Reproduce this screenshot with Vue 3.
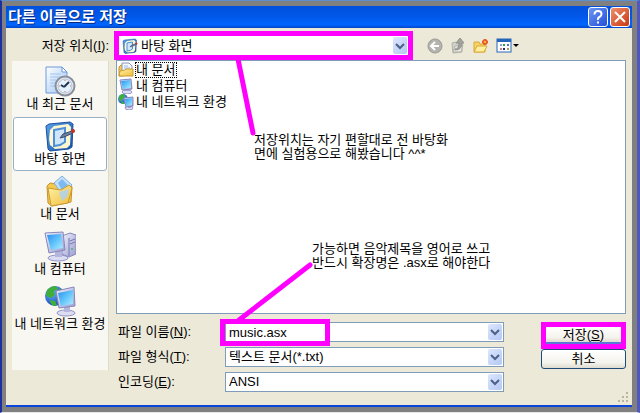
<script setup>
import { ref } from 'vue'

const places = [
  { id: 'recent', label: '내 최근 문서' },
  { id: 'desktop', label: '바탕 화면' },
  { id: 'documents', label: '내 문서' },
  { id: 'computer', label: '내 컴퓨터' },
  { id: 'network', label: '내 네트워크 환경' }
]

const files = [
  { id: 'documents', label: '내 문서' },
  { id: 'computer', label: '내 컴퓨터' },
  { id: 'network', label: '내 네트워크 환경' }
]

const activePlace = ref('desktop')
const focusedFile = ref('documents')
const location = ref('바탕 화면')
const fileName = ref('music.asx')
const fileType = ref('텍스트 문서(*.txt)')
const encoding = ref('ANSI')
</script>

<template>
  <div class="screen">
    <!-- shared icon shapes -->
    <svg class="defs" aria-hidden="true">
      <defs>
        <linearGradient id="screenFill" x1="0" y1="0" x2="1" y2="1">
          <stop offset="0" stop-color="#2f8df0" />
          <stop offset="0.5" stop-color="#5fc4fb" />
          <stop offset="1" stop-color="#b4ecff" />
        </linearGradient>
        <linearGradient id="caseFill" x1="0" y1="0" x2="1" y2="1">
          <stop offset="0" stop-color="#f0f1fc" />
          <stop offset="1" stop-color="#9a9cd0" />
        </linearGradient>
        <linearGradient id="folderFill" x1="0" y1="0" x2="1" y2="1">
          <stop offset="0" stop-color="#fff3a8" />
          <stop offset="1" stop-color="#f0bc3c" />
        </linearGradient>
        <linearGradient id="paperFill" x1="0" y1="0" x2="1" y2="1">
          <stop offset="0" stop-color="#ffffff" />
          <stop offset="1" stop-color="#9cc4f4" />
        </linearGradient>
        <linearGradient id="padFill" x1="0" y1="0" x2="1" y2="1">
          <stop offset="0" stop-color="#5aa2ea" />
          <stop offset="1" stop-color="#1450a8" />
        </linearGradient>
        <radialGradient id="globeFill" cx="0.35" cy="0.3" r="0.8">
          <stop offset="0" stop-color="#6fb4ff" />
          <stop offset="1" stop-color="#0b3fae" />
        </radialGradient>
      </defs>
      <symbol id="icon-recent" viewBox="0 0 32 32">
        <path d="M2 2h16l5 5v21H2z" fill="url(#paperFill)" stroke="#6c98da" />
        <path d="M18 2v5h5z" fill="#fff" stroke="#6c98da" />
        <path d="M6 9h11M6 12h10M6 15h6M6 18h5M6 21h5" stroke="#a3c4ef" />
        <circle cx="21" cy="21" r="9.5" fill="#e8edf6" stroke="#8a8f9c" stroke-width="2" />
        <circle cx="21" cy="21" r="7" fill="#e4f1ff" stroke="#b6bfce" />
        <path d="M20 22l5-5M17 20l3 2" stroke="#24364c" stroke-width="2" />
        <path d="M21 15v1M21 26v1M15 21h1M26 21h1" stroke="#d07a55" />
      </symbol>
      <symbol id="icon-desktop" viewBox="0 0 32 32">
        <path d="M2 6l3-2 21-2 3 2-1 23-3 2-19 2-2-2z" fill="url(#padFill)" stroke="#1d4f9d" />
        <path d="M10 6l14-2 3 3-1 18-3 3-12 1-5-4-1-6 1-9z" fill="#fdf6cf" />
        <path d="M10 10l11-2v14l-5 3-6 1z" fill="#cfe6fc" stroke="#4d90d8" stroke-width="2" />
        <path d="M16 18l3-4 9-3 1 2-9 4z" fill="#6d7f9a" stroke="#3c4c70" />
        <circle cx="29" cy="11" r="2" fill="#c03028" />
      </symbol>
      <symbol id="icon-documents" viewBox="0 0 32 32">
        <path d="M3 11l3-3 6 1 2 3 12-3 2 3-1 15-19 4-4-3z" fill="#f3c94e" stroke="#c6922a" />
        <path d="M10 8l8-7 10 9-9 10z" fill="#c6e1fb" stroke="#7db0e4" />
        <path d="M14 8l4-4 6 6-6 6z" fill="#7fb9f2" />
        <path d="M4 13l13 2 8-5 3 3-4 15-17 3z" fill="url(#folderFill)" stroke="#cb9a2e" />
        <path d="M15 17l10-3-2 8-5 4z" fill="#a8d2fa" opacity="0.8" />
      </symbol>
      <symbol id="icon-computer" viewBox="0 0 32 32">
        <path d="M18 6l8-3 6 2v19l-7 3-7-3z" fill="url(#caseFill)" stroke="#8688bb" />
        <path d="M25 8v18M26 11l5-2M26 14l5-2" stroke="#7476b0" />
        <circle cx="28" cy="19" r="1" fill="#4bb56c" />
        <ellipse cx="14" cy="28" rx="10" ry="3" fill="#dcddf3" stroke="#9294c4" />
        <path d="M11 21h7v6h-7z" fill="#b4b6de" />
        <path d="M1 3l18-1 2 18-16 3z" fill="url(#caseFill)" stroke="#8688bb" />
        <path d="M3 5l14-1 2 14-12 2z" fill="url(#screenFill)" />
      </symbol>
      <symbol id="icon-network" viewBox="0 0 32 32">
        <circle cx="11" cy="11" r="10" fill="url(#globeFill)" />
        <path d="M3 5q4-4 9-4l2 3-4 2 1 4-4 3-5-2zM6 15l5 1 2 4-3 1q-4-2-4-6zM16 3l4 4-4 3-2-3z" fill="#3fae3a" />
        <ellipse cx="22" cy="28" rx="9" ry="3" fill="#dcddf3" stroke="#9294c4" />
        <path d="M20 21h6v6h-6z" fill="#b4b6de" />
        <path d="M12 6l18-4 1 19-16 2z" fill="url(#caseFill)" stroke="#8688bb" />
        <path d="M14 8l15-3v14l-12 2z" fill="url(#screenFill)" />
      </symbol>
      <!-- 16px list versions -->
      <symbol id="small-documents" viewBox="0 0 16 16">
        <path d="M1 5l2-2h2v11H1z" fill="#f3c94e" stroke="#c6922a" />
        <path d="M4 1h7l3 3v8H4z" fill="#f4f8ff" stroke="#8a94b8" />
        <path d="M6 4h4M6 6h6" stroke="#9cb8e4" />
        <path d="M1 14l1-5 5-1 1-1h7v7z" fill="url(#folderFill)" stroke="#cb9a2e" />
      </symbol>
      <symbol id="small-computer" viewBox="0 0 16 16">
        <ellipse cx="9" cy="14" rx="5" ry="2" fill="#dcddf3" stroke="#9294c4" />
        <path d="M8 10h4v3H8z" fill="#a4a6d4" />
        <path d="M2 2l11-1 1 10-10 1z" fill="url(#caseFill)" stroke="#8688bb" />
        <path d="M3 3l9-1 1 8-8 1z" fill="url(#screenFill)" />
      </symbol>
      <symbol id="small-network" viewBox="0 0 16 16">
        <circle cx="5" cy="5" r="5" fill="url(#globeFill)" />
        <path d="M1 2q2-2 5-2l1 2-2 3-2 2-2-1zM3 7l3 1v2H4z" fill="#3fae3a" />
        <ellipse cx="11" cy="14" rx="4" ry="2" fill="#dcddf3" stroke="#9294c4" />
        <path d="M10 11h3v3h-3z" fill="#a4a6d4" />
        <path d="M6 4l9-1v9l-7 1z" fill="url(#caseFill)" stroke="#8688bb" />
        <path d="M7 5l7-1v7l-6 1z" fill="url(#screenFill)" />
      </symbol>
    </svg>

    <main class="dialog">
      <header class="title-bar">
        <h1>다른 이름으로 저장</h1>
        <button type="button" class="title-button help" aria-label="도움말">
          <svg width="18" height="18" viewBox="0 0 18 18" fill="none" stroke="#fff" stroke-width="2">
            <path d="M5.500 6.500q0-3.500 3.500-3.500t3.500 3q0 2-2 3T9 12" />
            <path d="M9 13.500v2" />
          </svg>
        </button>
        <button type="button" class="title-button close" aria-label="닫기">
          <svg width="18" height="18" viewBox="0 0 18 18" fill="none" stroke="#fff" stroke-width="2">
            <path d="M4 4l10 10M14 4L4 14" />
          </svg>
        </button>
      </header>

      <form class="body" @submit.prevent>
        <div class="location-row">
          <label for="location" class="location-label">저장 위치(<u>I</u>):</label>
          <div class="location-area">
            <div class="location-box marked">
              <div class="combo">
                <svg class="combo-icon" width="16" height="16"><use href="#icon-desktop" /></svg>
                <select id="location" v-model="location">
                  <option>바탕 화면</option>
                </select>
                <span class="arrow">
                  <svg width="10" height="8" viewBox="0 0 10 8"><path d="M1 2l4 4 4-4" /></svg>
                </span>
              </div>
            </div>
            <div class="toolbar">
              <button type="button" aria-label="뒤로">
                <svg width="16" height="16" viewBox="0 0 16 16">
                  <circle cx="8" cy="8" r="7" fill="#b4b4ae" stroke="#9a9a94" />
                  <path d="M12 8H5M8 4L4 8l4 4" fill="none" stroke="#fff" stroke-width="2" />
                </svg>
              </button>
              <button type="button" aria-label="한 수준 위로">
                <svg width="16" height="16" viewBox="0 0 16 16">
                  <path d="M2 5l4-1 1 1h5v9l-9 1z" fill="#d2d2ca" stroke="#b2b2aa" />
                  <path d="M3 14l2-6 8-1-2 7z" fill="#e8e8e0" stroke="#b2b2aa" />
                  <path d="M5 11q4 0 4-6H6l4-5 4 5h-2q0 7-7 7z" fill="#a2a29c" stroke="#94948e" />
                </svg>
              </button>
              <button type="button" aria-label="새 폴더 만들기">
                <svg width="16" height="16" viewBox="0 0 16 16">
                  <path d="M1 4h5l1 2h5v8H1z" fill="#f7d264" stroke="#d9a83a" />
                  <path d="M1 14l3-6h10l-3 6z" fill="#fff0a0" stroke="#d9a83a" />
                  <path d="M12 1v6M9 4h6M10 2l4 4M14 2l-4 4" stroke="#e85a28" stroke-width="2" />
                  <circle cx="12" cy="4" r="1" fill="#ffd24a" />
                </svg>
              </button>
              <button type="button" class="views" aria-label="보기 메뉴">
                <svg width="24" height="16" viewBox="0 0 24 16">
                  <rect x="1" y="1" width="14" height="13" fill="#fff" stroke="#2566bd" />
                  <path d="M1 2.500h14" stroke="#2566bd" stroke-width="3" />
                  <path d="M4 6h2v2H4z" fill="#8aa6d8" />
                  <path d="M7 6h2v2H7z" fill="#3c9a50" />
                  <path d="M11 6h2v2h-2z" fill="#4c78c0" />
                  <path d="M4 10h2v2H4z" fill="#c88080" />
                  <path d="M7 10h2v2H7z" fill="#182c80" />
                  <path d="M11 10h2v2h-2z" fill="#b09a40" />
                  <path d="M17 6h6l-3 3z" fill="#000" />
                </svg>
              </button>
            </div>
          </div>
        </div>

        <div class="main-row">
          <nav class="places">
            <button
              v-for="place in places"
              :key="place.id"
              type="button"
              class="place"
              :class="{ active: activePlace === place.id }"
              @click="activePlace = place.id"
            >
              <svg width="32" height="32"><use :href="`#icon-${place.id}`" /></svg>
              <span>{{ place.label }}</span>
            </button>
          </nav>

          <div class="content">
            <div class="file-pane">
              <ul class="file-list">
                <li v-for="file in files" :key="file.id" @click="focusedFile = file.id">
                  <svg width="16" height="16"><use :href="`#small-${file.id}`" /></svg>
                  <span :class="{ focused: focusedFile === file.id }">{{ file.label }}</span>
                </li>
              </ul>
              <svg class="pointers" width="1" height="1" aria-hidden="true">
                <path d="M121-2l15 74M193 204l-71 55" />
              </svg>
              <p class="note note-location">저장위치는 자기 편할대로 전 바탕화<br>면에 실험용으로 해봤습니다 ^^*</p>
              <p class="note note-name">가능하면 음악제목을 영어로 쓰고<br>반드시 확장명은 .asx로 해야한다</p>
            </div>

            <div class="bottom">
              <div class="fields">
                <label for="fileName">파일 이름(<u>N</u>):</label>
                <div class="combo name-combo">
                  <input id="fileName" v-model="fileName" type="text">
                  <button type="button" class="arrow" aria-label="파일 이름 목록">
                    <svg width="10" height="8" viewBox="0 0 10 8"><path d="M1 2l4 4 4-4" /></svg>
                  </button>
                </div>
                <label for="fileType">파일 형식(<u>T</u>):</label>
                <div class="combo">
                  <select id="fileType" v-model="fileType">
                    <option>텍스트 문서(*.txt)</option>
                  </select>
                  <span class="arrow">
                    <svg width="10" height="8" viewBox="0 0 10 8"><path d="M1 2l4 4 4-4" /></svg>
                  </span>
                </div>
                <label for="encoding">인코딩(<u>E</u>):</label>
                <div class="combo">
                  <select id="encoding" v-model="encoding">
                    <option>ANSI</option>
                  </select>
                  <span class="arrow">
                    <svg width="10" height="8" viewBox="0 0 10 8"><path d="M1 2l4 4 4-4" /></svg>
                  </span>
                </div>
              </div>
              <div class="actions">
                <div class="marked">
                  <button type="submit" class="save">저장(<u>S</u>)</button>
                </div>
                <button type="button" class="cancel">취소</button>
              </div>
            </div>
          </div>
        </div>
        <svg class="grip" width="12" height="12" viewBox="0 0 12 12" aria-hidden="true">
          <path d="M8 0h2v2H8zM4 4h2v2H4zM8 4h2v2H8zM0 8h2v2H0zM4 8h2v2H4zM8 8h2v2H8z" fill="#b8b4a0" />
        </svg>
      </form>
    </main>
  </div>
</template>

<style>
body {
  margin: 0;
}
</style>

<style scoped>
.screen {
  box-sizing: border-box;
  min-height: 100vh;
  display: flex;
  padding: 5px 5px 5px 4px;
  background: #808080;
  border-top: 1px solid #5b8fd0;
  border-left: 2px solid #1c2fa0;
  border-right: 3px solid #5058c0;
  border-bottom: 1px solid #e8e8e8;
  font-family: "Liberation Sans", "Noto Sans CJK KR", sans-serif;
  font-size: 13px;
  line-height: 16px;
  color: #000;
}

.defs {
  position: absolute;
  width: 0;
  height: 0;
}

.dialog {
  flex: 1;
  min-width: 0;
  display: flex;
  flex-direction: column;
  background: #ece9d8;
  border-bottom: 2px solid #0a46dc;
}

.title-bar {
  display: flex;
  align-items: center;
  gap: 2px;
  height: 22px;
  padding: 0 2px;
  background: linear-gradient(#0050dc, #0058ea 50%, #0066ff 85%, #0046c8);
}

h1 {
  flex: 1;
  margin: 0;
  font-size: 15px;
  line-height: 20px;
  font-weight: 700;
  color: #fff;
  text-shadow: 1px 1px #0a2a80;
}

button,
input,
select {
  margin: 0;
  padding: 0;
  border: none;
  background: none;
  font: inherit;
  color: inherit;
}

.title-button {
  display: flex;
  align-items: center;
  justify-content: center;
  width: 20px;
  height: 20px;
  border: 1px solid #fff;
  border-radius: 3px;
}

.help {
  background: linear-gradient(135deg, #6c96f4, #2450d8);
}

.close {
  background: linear-gradient(135deg, #f09070, #c83810);
}

.body {
  position: relative;
  flex: 1;
  display: flex;
  flex-direction: column;
  padding: 3px 6px 13px;
}

.location-row {
  display: flex;
  align-items: center;
  gap: 5px;
}

.location-label {
  width: 97px;
  text-align: right;
}

.location-area {
  flex: 1;
  display: grid;
  grid-template-columns: 7fr 5fr;
}

.marked {
  border: 5px solid #ff00ff;
}

.location-box .combo {
  border: none;
  height: 19px;
}

.toolbar {
  display: flex;
  align-items: center;
  gap: 7px;
  padding-left: 14px;
}

.toolbar button {
  display: flex;
}

.combo {
  position: relative;
  box-sizing: border-box;
  display: flex;
  align-items: center;
  height: 20px;
  background: #fff;
  border: 1px solid #7f9db9;
}

.combo-icon {
  margin-left: 3px;
}

.combo select,
.combo input {
  flex: 1;
  min-width: 0;
  height: 18px;
  padding: 0 20px 0 3px;
  appearance: none;
  outline: none;
}

.arrow {
  position: absolute;
  top: 1px;
  right: 1px;
  bottom: 1px;
  width: 14px;
  display: flex;
  align-items: center;
  justify-content: center;
  background: linear-gradient(135deg, #dce6fe, #b4c8f4);
  border-radius: 2px;
  pointer-events: none;
}

.arrow path {
  fill: none;
  stroke: #4d6185;
  stroke-width: 2;
}

.main-row {
  flex: 1;
  display: flex;
  gap: 7px;
}

.places {
  box-sizing: border-box;
  width: 97px;
  margin: 1px 0 22px;
  padding: 1px;
  display: flex;
  flex-direction: column;
  gap: 1px;
  background: #f8f7f2;
  border-right: 1px solid #dedbcb;
}

.place {
  display: flex;
  flex-direction: column;
  align-items: center;
  height: 54px;
  padding-top: 2px;
  border: 1px solid transparent;
  border-radius: 3px;
  line-height: 14px;
  white-space: nowrap;
}

.place.active {
  background: #fff;
  border-color: #98b0c4;
}

.content {
  flex: 1;
  min-width: 0;
  display: flex;
  flex-direction: column;
}

.file-pane {
  position: relative;
  flex: 1;
  min-height: 240px;
  background: #fff;
  border: 1px solid #7f9db9;
}

.file-list {
  margin: 0;
  padding: 1px;
  list-style: none;
}

.file-list li {
  display: flex;
  align-items: center;
  gap: 1px;
  height: 16px;
}

.file-list span {
  border: 1px dotted transparent;
  line-height: 14px;
}

.file-list .focused {
  border-color: #000;
}

.pointers {
  position: absolute;
  top: 0;
  left: 0;
  z-index: 2;
  overflow: visible;
}

.pointers path {
  fill: none;
  stroke: #ff00ff;
  stroke-width: 5;
  stroke-linecap: round;
}

.note {
  position: absolute;
  margin: 0;
  line-height: 14px;
  white-space: nowrap;
}

.note-location {
  top: 72px;
  left: 137px;
}

.note-name {
  top: 181px;
  left: 195px;
}

.bottom {
  display: flex;
  gap: 37px;
  margin-top: 8px;
}

.fields {
  flex: 1;
  display: grid;
  grid-template-columns: 107px 1fr;
  align-items: center;
  gap: 5px 0;
  padding-left: 2px;
}

.name-combo::after {
  content: "";
  position: absolute;
  top: -4px;
  left: -6px;
  width: 100px;
  height: 17px;
  border: 5px solid #ff00ff;
  pointer-events: none;
}

.actions {
  width: 85px;
  display: flex;
  flex-direction: column;
}

.save,
.cancel {
  width: 100%;
  background: linear-gradient(#fff, #f4f3ec 70%, #dedbd0);
}

.save {
  display: block;
  height: 17px;
  line-height: 14px;
  border-bottom: 2px solid #5a78d8;
}

.cancel {
  height: 20px;
  line-height: 16px;
  border: 1px solid #1d4a78;
  border-radius: 3px;
}

.grip {
  position: absolute;
  right: 2px;
  bottom: 1px;
}
</style>
